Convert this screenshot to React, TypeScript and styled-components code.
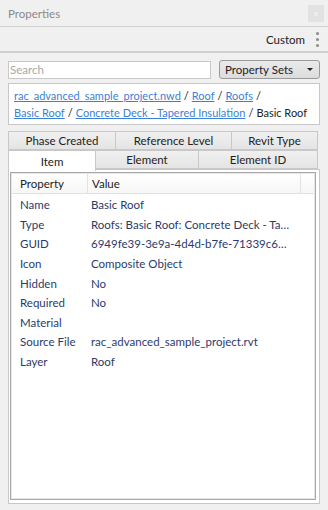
import React from 'react';
import styled, { createGlobalStyle } from 'styled-components';

const GlobalStyle = createGlobalStyle`
  html, body {
    margin: 0;
    padding: 0;
    background: #f0f0f0;
  }
  body {
    font-family: Lato, "Noto Sans", sans-serif;
    font-size: 11px;
    color: #222;
  }
`;

const Panel = styled.div`
  width: 328px;
  height: 510px;
  display: flex;
  flex-direction: column;
  background: #f0f0f0;
  overflow: hidden;
`;

const TitleBar = styled.div`
  height: 26px;
  display: flex;
  align-items: center;
  justify-content: space-between;
  padding: 0 4px 0 8px;
  border-bottom: 1px solid #d2d2d2;
`;

const Title = styled.span`
  font-size: 11.5px;
  color: #8a8a8a;
`;

const CloseButton = styled.div`
  width: 16px;
  height: 17px;
  background: #e2e2e2;
  color: #fafafa;
  font-size: 8px;
  display: flex;
  align-items: center;
  justify-content: center;
`;

const Toolbar = styled.div`
  height: 24px;
  display: flex;
  align-items: center;
  justify-content: flex-end;
  gap: 11px;
  padding: 0 9px 0 8px;
  border-bottom: 2px solid #cfcfcf;
`;

const ToolbarLabel = styled.span`
  font-size: 11.5px;
  color: #222;
`;

const Kebab = styled.div`
  display: flex;
  flex-direction: column;
  gap: 3px;

  span {
    width: 3px;
    height: 3px;
    border-radius: 50%;
    background: #8a8a8a;
  }
`;

const Body = styled.div`
  flex: 1;
  display: flex;
  flex-direction: column;
  padding: 7px 8px 6px 8px;
`;

const SearchRow = styled.div`
  display: flex;
  align-items: center;
  gap: 8px;
`;

const SearchInput = styled.div`
  flex: 1;
  height: 16px;
  border: 1px solid #c8c8c8;
  background: #fff;
  color: #a8a8a8;
  font-size: 11.5px;
  line-height: 16px;
  padding-left: 1px;
`;

const SetsButton = styled.div`
  width: 88px;
  height: 17px;
  border: 1px solid #9a9a9a;
  border-radius: 3px;
  background: linear-gradient(#eaeaea, #dcdcdc);
  display: flex;
  align-items: center;
  justify-content: space-between;
  padding: 0 6px 0 5px;
  font-size: 11.5px;
  color: #222;
`;

const Caret = styled.span`
  width: 0;
  height: 0;
  border-left: 3px solid transparent;
  border-right: 3px solid transparent;
  border-top: 3px solid #222;
`;

const Breadcrumbs = styled.div`
  margin-top: 4px;
  height: 40px;
  box-sizing: content-box;
  border: 1px solid #c8c8c8;
  background: #fff;
  padding: 0 5px;
  font-size: 11px;
  line-height: 17px;
  color: #222;
  white-space: nowrap;
  display: flex;
  flex-direction: column;
  justify-content: center;
`;

const CrumbLine = styled.div``;

const Crumb = styled.a`
  color: #3d7fd6;
  text-decoration: underline;
`;

const Sep = styled.span`
  margin: 0 3px;
`;

const Tabs = styled.div`
  margin-top: 6px;
  display: flex;
  flex-direction: column;
`;

const TabRow = styled.div`
  display: flex;
  height: 19px;
`;

const Tab = styled.div<{ $w: number; $active?: boolean }>`
  width: ${({ $w }) => $w}px;
  box-sizing: border-box;
  display: flex;
  align-items: center;
  justify-content: center;
  font-size: 11.5px;
  color: #222;
  border: 1px solid #c8c8c8;
  border-bottom: ${({ $active }) => ($active ? 'none' : '1px solid #c8c8c8')};
  background: ${({ $active }) => ($active ? '#fff' : 'linear-gradient(#f0f0f0, #e4e4e4)')};
  height: ${({ $active }) => ($active ? '21px' : '19px')};
  position: relative;
  z-index: ${({ $active }) => ($active ? 1 : 0)};

  & + & {
    border-left: none;
  }
`;

const Content = styled.div`
  flex: 1;
  border: 1px solid #c8c8c8;
  background: #fff;
  padding: 2px 3px 3px 1px;
  display: flex;
`;

const Grid = styled.div`
  flex: 1;
  border: 1px solid #a8a8a8;
  box-shadow: inset 0 0 0 1px #e6e6e6;
  overflow: hidden;
`;

const HeaderRow = styled.div`
  display: grid;
  grid-template-columns: 75px 1fr 14px;
  height: 19px;
  background: linear-gradient(#fff, #f6f6f6);
  border-bottom: 1px solid #e2e2e2;
  margin: 1px 1px 0 1px;
`;

const HeaderCell = styled.div`
  display: flex;
  align-items: center;
  padding-left: 8px;
  font-size: 11.5px;
  color: #222;

  & + & {
    border-left: 1px solid #e2e2e2;
    padding-left: 4px;
  }
`;

const Rows = styled.div`
  padding-top: 1px;
`;

const Row = styled.div`
  display: grid;
  grid-template-columns: 76px 1fr;
  height: 19.6px;
  align-items: center;
  font-size: 11.5px;
  color: #2b3a6b;
  padding-right: 22px;
`;

const Cell = styled.div`
  padding-left: 9px;
  white-space: nowrap;
  overflow: hidden;
  text-overflow: ellipsis;

  & + & {
    padding-left: 4px;
  }
`;

const props: [string, string][] = [
  ['Name', 'Basic Roof'],
  ['Type', 'Roofs: Basic Roof: Concrete Deck - Tapered Insulation'],
  ['GUID', '6949fe39-3e9a-4d4d-b7fe-71339c637a1e'],
  ['Icon', 'Composite Object'],
  ['Hidden', 'No'],
  ['Required', 'No'],
  ['Material', ''],
  ['Source File', 'rac_advanced_sample_project.rvt'],
  ['Layer', 'Roof'],
];

export default function App() {
  return (
    <>
      <GlobalStyle />
      <Panel>
        <TitleBar>
          <Title>Properties</Title>
          <CloseButton>x</CloseButton>
        </TitleBar>
        <Toolbar>
          <ToolbarLabel>Custom</ToolbarLabel>
          <Kebab><span /><span /><span /></Kebab>
        </Toolbar>
        <Body>
          <SearchRow>
            <SearchInput>Search</SearchInput>
            <SetsButton>
              Property Sets
              <Caret />
            </SetsButton>
          </SearchRow>
          <Breadcrumbs>
            <CrumbLine>
              <Crumb>rac_advanced_sample_project.nwd</Crumb><Sep>/</Sep>
              <Crumb>Roof</Crumb><Sep>/</Sep>
              <Crumb>Roofs</Crumb><Sep>/</Sep>
            </CrumbLine>
            <CrumbLine>
              <Crumb>Basic Roof</Crumb><Sep>/</Sep>
              <Crumb>Concrete Deck - Tapered Insulation</Crumb><Sep>/</Sep>
              Basic Roof
            </CrumbLine>
          </Breadcrumbs>
          <Tabs>
            <TabRow>
              <Tab $w={108}>Phase Created</Tab>
              <Tab $w={116}>Reference Level</Tab>
              <Tab $w={86}>Revit Type</Tab>
            </TabRow>
            <TabRow>
              <Tab $w={88} $active>Item</Tab>
              <Tab $w={103}>Element</Tab>
              <Tab $w={119}>Element ID</Tab>
            </TabRow>
          </Tabs>
          <Content>
            <Grid>
              <HeaderRow>
                <HeaderCell>Property</HeaderCell>
                <HeaderCell>Value</HeaderCell>
                <HeaderCell />
              </HeaderRow>
              <Rows>
                {props.map(([k, v]) => (
                  <Row key={k}>
                    <Cell>{k}</Cell>
                    <Cell>{v}</Cell>
                  </Row>
                ))}
              </Rows>
            </Grid>
          </Content>
        </Body>
      </Panel>
    </>
  );
}
